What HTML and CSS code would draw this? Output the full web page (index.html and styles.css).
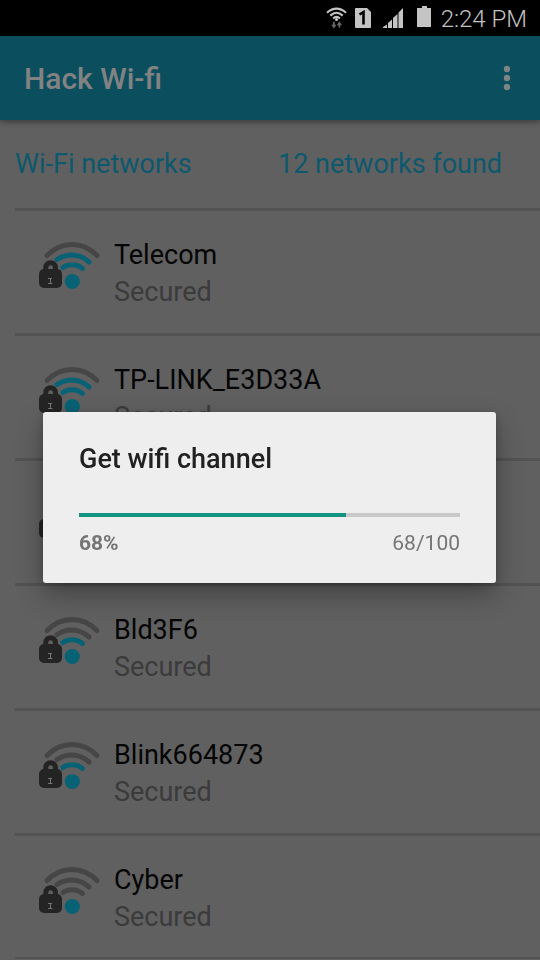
FILE: index.html
```html
<!DOCTYPE html>
<html lang="en">
<head>
<meta charset="utf-8">
<meta name="viewport" content="width=device-width, initial-scale=1">
<title>Hack Wi-fi</title>
<link rel="stylesheet" href="styles.css">
</head>
<body>
<svg class="defs" aria-hidden="true">
  <symbol id="arc-outer" viewBox="0 0 80 70"><path d="M17 25.500Q28 14.500 42 14.500T67 25.500"/></symbol>
  <symbol id="arc-middle" viewBox="0 0 80 70"><path d="M27 29.500Q34 25 42 25Q51 25 59 32"/></symbol>
  <symbol id="arc-inner" viewBox="0 0 80 70"><path d="M33 37.500Q37 34.700 42 34.700Q48 34.700 52.500 38.500"/></symbol>
  <symbol id="base" viewBox="0 0 80 70">
    <circle class="dot" cx="42.300" cy="51.500" r="7.600"/>
    <path class="shackle" d="M15.800 43V37.500a4.800 4.800 0 0 1 9.600 0V43"/>
    <rect class="lock" x="9" y="39" width="23" height="19" rx="5"/>
    <path class="keyhole" d="M18.500 48.500H21.500M20.500 48.500V53.500M18.500 53.500H22"/>
  </symbol>
</svg>

<div class="screen">
  <div class="status">
    <svg class="status-wifi" width="21" height="24" viewBox="0 0 22 24" aria-label="Wi-Fi">
      <g fill="none" stroke="#c4c4c4" stroke-width="2.200">
        <path d="M1 6.500Q11 -2 21 6.500"/><path d="M4.500 9.500Q11 3.500 17.500 9.500"/><path d="M7.500 12.500Q11 9 14.500 12.500"/>
      </g>
      <circle cx="11" cy="13.500" r="1.600" fill="#c4c4c4"/>
      <path d="M8.200 16V21M14 22V17" fill="none" stroke="#686868" stroke-width="1.800"/>
      <path d="M5.500 19H10.900L8.200 23zM11.300 19.500H16.700L14 15.500z" fill="#686868"/>
    </svg>
    <svg class="status-sim" width="16" height="20" viewBox="0 0 16 20" aria-label="SIM 1">
      <path d="M0 1a1 1 0 0 1 1-1H12L16 4V19a1 1 0 0 1-1 1H1a1 1 0 0 1-1-1z" fill="#c4c4c4"/>
      <path d="M4.500 6.500L8.500 4V16.500" fill="none" stroke="#000" stroke-width="2.600"/>
    </svg>
    <svg class="status-signal" width="20" height="20" viewBox="0 0 20 20" aria-label="Signal">
      <path d="M0 20V19L4 16.500V20zM5 20V15L9 11.500V20zM10 20V10L14.500 6V20zM15.500 20V4.500L20 0V20z" fill="#c4c4c4"/>
    </svg>
    <svg class="status-battery" width="14" height="21" viewBox="0 0 14 21" aria-label="Battery">
      <path d="M5 0H10V2H14V21H0V2H5z" fill="#c4c4c4"/>
    </svg>
    <span class="time">2:24 PM</span>
  </div>

  <header class="appbar">
    <h1>Hack Wi-fi</h1>
    <button class="more" type="button" aria-label="More options">
      <svg width="8" height="26" viewBox="0 0 8 26"><circle cx="4" cy="4" r="3.200"/><circle cx="4" cy="13" r="3.200"/><circle cx="4" cy="22" r="3.200"/></svg>
    </button>
  </header>

  <main>
    <div class="summary"><span>Wi-Fi networks</span><span>12 networks found</span></div>
    <ul class="networks">
      <li>
        <svg class="wifi strength-3" viewBox="0 0 80 70"><use class="outer" href="#arc-outer"/><use class="middle" href="#arc-middle"/><use class="inner" href="#arc-inner"/><use href="#base"/></svg>
        <div><p class="name">Telecom</p><p class="security">Secured</p></div>
      </li>
      <li>
        <svg class="wifi strength-3" viewBox="0 0 80 70"><use class="outer" href="#arc-outer"/><use class="middle" href="#arc-middle"/><use class="inner" href="#arc-inner"/><use href="#base"/></svg>
        <div><p class="name">TP-LINK_E3D33A</p><p class="security">Secured</p></div>
      </li>
      <li>
        <svg class="wifi strength-3" viewBox="0 0 80 70"><use class="outer" href="#arc-outer"/><use class="middle" href="#arc-middle"/><use class="inner" href="#arc-inner"/><use href="#base"/></svg>
      </li>
      <li>
        <svg class="wifi strength-2" viewBox="0 0 80 70"><use class="outer" href="#arc-outer"/><use class="middle" href="#arc-middle"/><use class="inner" href="#arc-inner"/><use href="#base"/></svg>
        <div><p class="name">Bld3F6</p><p class="security">Secured</p></div>
      </li>
      <li>
        <svg class="wifi strength-2" viewBox="0 0 80 70"><use class="outer" href="#arc-outer"/><use class="middle" href="#arc-middle"/><use class="inner" href="#arc-inner"/><use href="#base"/></svg>
        <div><p class="name">Blink664873</p><p class="security">Secured</p></div>
      </li>
      <li>
        <svg class="wifi strength-1" viewBox="0 0 80 70"><use class="outer" href="#arc-outer"/><use class="middle" href="#arc-middle"/><use class="inner" href="#arc-inner"/><use href="#base"/></svg>
        <div><p class="name">Cyber</p><p class="security">Secured</p></div>
      </li>
    </ul>
  </main>
</div>

<div class="overlay">
  <section class="dialog" role="dialog" aria-labelledby="dialog-title">
    <h2 id="dialog-title">Get wifi channel</h2>
    <progress value="70" max="100" aria-labelledby="dialog-title"></progress>
    <div class="counts"><strong>68%</strong><span>68/100</span></div>
  </section>
</div>
</body>
</html>
```
FILE: styles.css
```css
* { box-sizing: border-box; }

body {
  margin: 0;
  background: #606060;
  color: #050505;
  font-family: Roboto, "Liberation Sans", sans-serif;
  font-size: 27px;
}

h1, h2, p, ul { margin: 0; padding: 0; }

.defs { position: absolute; width: 0; height: 0; }

.screen { height: 100vh; overflow: hidden; }

.status {
  display: flex;
  align-items: center;
  justify-content: flex-end;
  height: 36px;
  padding-right: 13px;
  background: #000;
  color: #c4c4c4;
}

.status svg { flex: none; }
.status-wifi { margin-right: 8px; }
.status-sim { margin-right: 12px; }
.status-signal { margin-right: 14px; }
.status-battery { margin: 0 10px 4px 0; }

.time { font-size: 24px; font-weight: 300; line-height: 36px; padding-top: 2px; }

.appbar {
  position: relative;
  display: flex;
  align-items: center;
  justify-content: space-between;
  height: 84px;
  padding: 0 24px;
  background: #0b4f5f;
  box-shadow: 0 2px 6px rgba(0, 0, 0, 0.4);
}

h1 {
  padding-top: 2px;
  color: #828282;
  font-size: 30px;
  font-weight: 500;
  line-height: 36px;
}

.more {
  display: grid;
  place-items: center;
  width: 18px;
  height: 48px;
  padding: 0;
  border: 0;
  background: none;
  fill: #7d8484;
}

.summary {
  display: grid;
  grid-template-columns: 263px 1fr;
  height: 88px;
  padding-left: 15px;
  color: #0d586d;
  line-height: 88px;
}

.networks { list-style: none; padding-left: 15px; }

.networks li {
  display: flex;
  height: 125px;
  padding-left: 15px;
  border-top: 3px solid #535353;
}

.networks li:last-child { height: 126px; border-bottom: 2px solid #535353; }

.networks li > div { padding: 26px 0 0 4px; }

.name, .security { line-height: 37px; }
.security { color: #3b3b3b; }

.wifi {
  flex: none;
  width: 80px;
  height: 70px;
  margin-top: 19px;
  fill: none;
  stroke-width: 5;
  stroke-linecap: round;
}

.outer, .middle, .inner { stroke: #464647; }
.strength-3 .middle, .strength-3 .inner, .strength-2 .inner { stroke: #076275; }

.dot { fill: #076275; }
.shackle { stroke: #242424; stroke-width: 5; }
.lock { fill: #242424; }
.keyhole { stroke: #777; stroke-width: 1; }

.overlay {
  position: fixed;
  inset: 36px 0 0;
  display: grid;
  place-items: center;
  padding: 0 44px 2px 43px;
}

.dialog {
  width: 100%;
  padding: 29px 36px 24px;
  border-radius: 3px;
  background: #eee;
  box-shadow: 0 12px 28px rgba(0, 0, 0, 0.3), 0 2px 8px rgba(0, 0, 0, 0.2);
}

h2 {
  color: #212121;
  font-size: 27px;
  font-weight: 500;
  line-height: 37px;
}

progress {
  display: block;
  appearance: none;
  width: 100%;
  height: 4px;
  margin: 35px 0 10px;
  border: 0;
  background: #c9c9c9;
}

progress::-webkit-progress-bar { background: #c9c9c9; }
progress::-webkit-progress-value { background: #129482; }

.counts {
  display: flex;
  justify-content: space-between;
  color: #757575;
  font-size: 21px;
  line-height: 32px;
}
```
